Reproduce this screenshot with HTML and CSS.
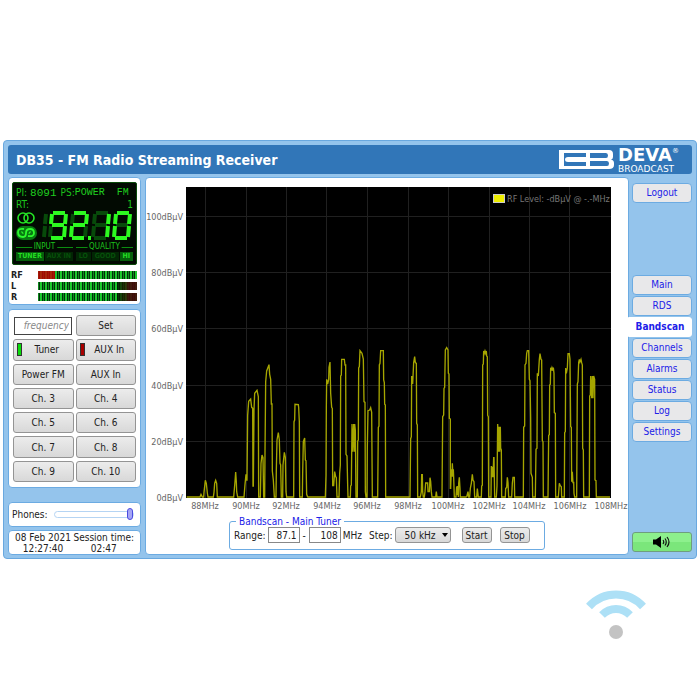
FILE: index.html
```html
<!DOCTYPE html>
<html lang="en">
<head>
<meta charset="utf-8">
<title>DB35 - FM Radio Streaming Receiver</title>
<link rel="stylesheet" href="styles.css">
</head>
<body>
<div class="app">
  <header class="header">
    <h1>DB35 - FM Radio Streaming Receiver</h1>
    <div class="brand">
      <svg class="brand-mark" width="55" height="20" viewBox="0 0 55 20" aria-hidden="true">
        <path fill="#fff" fill-rule="evenodd" d="M0 0H50Q54 0 54 4V7Q54 9 52 9.500Q55 10 55 13V15Q55 19 50 19H0ZM5 3V16H27V3ZM31 3V8H47Q49 8 49 5.500Q49 3 47 3ZM31 11V16H48Q50 16 50 13.500Q50 11 48 11Z"/>
        <path fill="#fff" d="M9 7H31V12H9Q6 12 6 9.500Q6 7 9 7Z"/>
      </svg>
      <div class="brand-name"><strong>DEVA<sup>®</sup></strong><span>BROADCAST</span></div>
    </div>
  </header>
  <div class="body">
    <aside class="side">
      <section class="panel display">
        <div class="lcd">
          <div class="lcd-row"><span>PI:</span><code class="code">8091</code><span class="ps">PS:</span><code>POWER&nbsp; FM</code></div>
          <div class="lcd-row rt"><span>RT:</span><span>1</span></div>
          <div class="lcd-main">
            <svg class="lcd-icons" width="22" height="32" viewBox="0 0 22 32" aria-hidden="true">
              <g fill="none" stroke="#25e625" stroke-width="1.600"><circle cx="7" cy="7" r="5"/><circle cx="13" cy="7" r="5"/></g>
              <rect x="0" y="15" width="21" height="14" rx="7" fill="#087a12"/>
              <path d="M8 18Q2 17 2 21Q2 26 7 26Q10 26 10 22Q10 18 14 18Q18 18 18 22Q18 26 12 25" fill="none" stroke="#2dfa2d" stroke-width="1.800"/>
              <path d="M5 21Q7 20 7 23M15 21Q13 20 13 23" fill="none" stroke="#2dfa2d"/>
            </svg>
            <svg class="segments" width="91" height="30" viewBox="0 0 91 30" role="img" aria-label="92.10">
              <defs>
                <path id="sa" d="M5 2H17"/><path id="sb" d="M18 3L17 13"/><path id="sc" d="M17 15L16 26"/>
                <path id="sd" d="M3 27H15"/><path id="se" d="M3 15L2 26"/><path id="sf" d="M4 3L3 13"/><path id="sg" d="M4 14H16"/>
              </defs>
              <g class="off">
                <path d="M4 3L3 13M3 15L2 26"/>
                <use href="#se" x="6"/><use href="#sf" x="27"/><use href="#sc" x="27"/>
                <use href="#sa" x="49"/><use href="#sd" x="49"/><use href="#se" x="49"/><use href="#sf" x="49"/><use href="#sg" x="49"/>
                <use href="#sg" x="70"/>
              </g>
              <g class="on">
                <use href="#sa" x="6"/><use href="#sb" x="6"/><use href="#sc" x="6"/><use href="#sd" x="6"/><use href="#sf" x="6"/><use href="#sg" x="6"/>
                <use href="#sa" x="27"/><use href="#sb" x="27"/><use href="#sg" x="27"/><use href="#se" x="27"/><use href="#sd" x="27"/>
                <path d="M46 27H49"/>
                <use href="#sb" x="49"/><use href="#sc" x="49"/>
                <use href="#sa" x="70"/><use href="#sb" x="70"/><use href="#sc" x="70"/><use href="#sd" x="70"/><use href="#se" x="70"/><use href="#sf" x="70"/>
              </g>
            </svg>
          </div>
          <div class="lcd-groups">
            <div class="lcd-group input"><span class="cap">INPUT</span><div><b class="lit">TUNER</b><b>AUX IN</b></div></div>
            <div class="lcd-group quality"><span class="cap">QUALITY</span><div><b>LO</b><b>GOOD</b><b class="lit">HI</b></div></div>
          </div>
        </div>
        <div class="meters">
          <span>RF</span><i class="meter rf"></i>
          <span>L</span><i class="meter level"></i>
          <span>R</span><i class="meter level"></i>
        </div>
      </section>
      <section class="panel keys">
        <input type="text" placeholder="frequency" aria-label="Frequency">
        <button>Set</button>
        <button class="source"><i class="led green"></i>Tuner</button><button class="source"><i class="led red"></i>AUX In</button>
        <button>Power FM</button><button>AUX In</button>
        <button>Ch. 3</button><button>Ch. 4</button>
        <button>Ch. 5</button><button>Ch. 6</button>
        <button>Ch. 7</button><button>Ch. 8</button>
        <button>Ch. 9</button><button>Ch. 10</button>
      </section>
      <section class="panel phones">
        <label for="phones">Phones:</label>
        <input id="phones" type="range" min="0" max="100" value="100">
      </section>
      <section class="panel clock">
        <div>08 Feb 2021<br>12:27:40</div>
        <div>Session time:<br>02:47</div>
      </section>
    </aside>
    <main class="panel main">
      <svg class="chart" viewBox="146 178 482 336" role="img" aria-label="RF level by frequency">
        <rect x="186" y="187" width="425" height="311" fill="#000"/>
        <path class="grid" d="M205.500 187V498M246.500 187V498M286.500 187V498M326.500 187V498M367.500 187V498M408.500 187V498M448.500 187V498M489.500 187V498M529.500 187V498M569.500 187V498M186 216.500H611M186 272.500H611M186 328.500H611M186 385.500H611M186 441.500H611"/>
        <g class="trace">
          <path transform="translate(140 340) scale(.33333)" d="M140 471H180L183 463 187 471H191L192 457 195 430 196 421 199 430 202 459 204 471H220L222 457 224 430 227 421 230 430 232 471H281L285 425 287 396 289 425 290 455 293 471H312L315 433 318 403 319 420 321 420 323 226 326 184 332 177 335 202 338 205 339 438 340 438 342 210 344 160 351 151 355 170 356 471H361L363 370 366 345 369 353 371 471H374L375 338 377 125 380 93 387 74 389 103 392 118 394 192 396 192 397 393 400 420 403 471H408L409 390 411 300 415 278 418 300 420 370 422 375 424 471H428L429 375 433 337 436 352 438 455 440 471H461L462 245 464 240 465 193 475 194 476 202 478 245 479 471H487L488 400 490 305 494 294 496 360 498 362 500 463 503 471"/>
          <path transform="translate(300 340) scale(.33333)" d="M22 471H76L78 405 79 205 80 118 83 132 86 118 87 82 90 66 92 160 95 202 97 205 98 437 101 437 104 395 107 410 109 413 111 471H117L119 400 121 375 122 108 124 105 125 58 133 58 135 75 137 75 138 343 141 348 143 435 144 471H151L152 438 154 435 156 252 158 335 161 252 163 335 164 252 166 270 168 471H172L173 303 175 300 176 84 178 80 180 32 186 40 190 57 192 185 195 187 196 455 198 471H201L202 320 204 212 209 210 212 203 215 217 217 471H233L235 262 237 258 238 75 240 70 242 32 250 32 251 120 253 128 254 193 256 195 257 471H330L332 296 334 290 335 108 338 132 341 68 344 50 346 68 349 70 350 250 352 255 353 471H361L364 455 365 404 367 404 368 455 370 471H373L375 455 377 429 383 429 384 455 388 455 390 413 392 425 394 455 396 471H407L409 455 411 471H426L428 230 431 225 432 145 434 142 436 30 440 23 444 30 445 100 447 102 448 235 451 237 451 445 452 445 454 388 456 410 457 370 459 410 460 388 461 412 463 471H468L470 440 471 465 472 438 475 471 476 430 478 412 480 445 481 471H500"/>
          <path transform="translate(450 340) scale(.33333)" d="M50 471L54 455 56 471H59L61 445 64 430 67 403 69 420 72 425 74 471H80L82 446 85 471H94L95 438 97 436 98 75 100 72 101 33 103 40 105 33 107 40 109 33 110 48 112 50 113 226 115 230 116 471H123L124 378 126 412 128 380 129 412 131 353 132 353 134 471H139L141 438 143 252 146 335 147 260 149 335 151 260 152 325 154 330 155 471H166L167 445 170 443 172 412 174 428 176 471H185L187 430 189 412 193 412 194 471H220L221 262 224 258 225 75 228 70 230 40 232 32 236 32 238 118 240 122 242 235 243 400 247 412 248 471H256L258 328 261 325 262 100 265 108 268 58 270 41 273 58 275 60 277 302 279 305 280 471H294L296 286 298 284 299 135 301 133 302 83 304 92 306 83 309 92 310 83 312 100 313 218 316 220 317 471H325L328 430 331 437 334 440 335 471H343L344 278 346 275 347 84 349 100 352 84 354 41 358 41 360 58 362 260 364 262 365 425 367 395 369 430 371 425 372 460 374 471H380L382 132 384 125 386 68 388 58 390 66 393 58 395 68 397 75 398 325 400 330 401 471H418L419 168 421 165 422 108 425 175 427 108 429 175 431 108 434 118 435 420 438 422 439 471H480"/>
        </g>
        <rect x="493.500" y="194.500" width="11" height="8" fill="#ee0" stroke="#ccc"/>
        <text class="key" x="507" y="202">RF Level: -dBµV @ -.-MHz</text>
        <g class="axis end">
          <text x="183" y="220">100dBµV</text><text x="183" y="276">80dBµV</text><text x="183" y="332">60dBµV</text>
          <text x="183" y="389">40dBµV</text><text x="183" y="445">20dBµV</text><text x="183" y="501">0dBµV</text>
        </g>
        <g class="axis mid">
          <text x="205" y="509">88MHz</text><text x="246" y="509">90MHz</text><text x="286" y="509">92MHz</text><text x="327" y="509">94MHz</text>
          <text x="367" y="509">96MHz</text><text x="408" y="509">98MHz</text><text x="448" y="509">100MHz</text><text x="489" y="509">102MHz</text>
          <text x="529" y="509">104MHz</text><text x="570" y="509">106MHz</text><text x="611" y="509">108MHz</text>
        </g>
      </svg>
      <fieldset class="scan">
        <legend>Bandscan - Main Tuner</legend>
        <div class="scan-row">
          <label for="from">Range:</label><input id="from" type="text" value="87.1">
          <span class="dash">-</span><input type="text" value="108" aria-label="Range end"><span class="unit">MHz</span>
          <label class="step" for="step">Step:</label>
          <span class="select"><select id="step"><option>50 kHz</option></select></span>
          <button class="start">Start</button><button>Stop</button>
        </div>
      </fieldset>
    </main>
    <nav class="nav">
      <a class="logout" href="#logout">Logout</a>
      <a href="#main">Main</a>
      <a href="#rds">RDS</a>
      <a class="active" href="#bandscan">Bandscan</a>
      <a href="#channels">Channels</a>
      <a href="#alarms">Alarms</a>
      <a href="#status">Status</a>
      <a href="#log">Log</a>
      <a href="#settings">Settings</a>
      <button class="listen" aria-label="Listen">
        <svg width="18" height="14" viewBox="0 0 18 14" aria-hidden="true">
          <path d="M0 4.500H3L8 1V13L3 9.500H0Z" fill="#000"/>
          <path d="M10 5Q11.500 7 10 9M12 3.500Q14.500 7 12 10.500M14 2Q18 7 14 12" fill="none" stroke="#111" stroke-width="1.200"/>
        </svg>
      </button>
    </nav>
  </div>
</div>
<footer class="signal">
  <svg width="62" height="50" viewBox="0 0 62 50" aria-hidden="true">
    <path d="M4 17.500Q15 5.500 31 5.500T58 17.500" fill="none" stroke="#ade0f6" stroke-width="8"/>
    <path d="M17 26Q23 20 31 20T45 26" fill="none" stroke="#ade0f6" stroke-width="8"/>
    <circle cx="31" cy="43" r="7" fill="#c3c3c3"/>
  </svg>
</footer>
</body>
</html>
```
FILE: styles.css
```css
* { box-sizing: border-box; }

body {
  margin: 0;
  padding: 140px 3px 0;
  background: #fff;
  color: #222;
  font: 10px/11px "DejaVu Sans Condensed", "DejaVu Sans", sans-serif;
}

button, input, select { font: inherit; color: inherit; margin: 0; }

.app {
  padding: 4px 4px 3px;
  border: 1px solid #69a8df;
  border-radius: 4px;
  background: #94c4ec;
}

.header {
  display: flex;
  align-items: center;
  justify-content: space-between;
  height: 29px;
  margin-bottom: 3px;
  padding: 0 6px 0 8px;
  border-radius: 3px;
  background: #3176b8;
  color: #fff;
}

h1 {
  margin: 0;
  font: bold 14px/16px "DejaVu Sans Condensed", "DejaVu Sans", sans-serif;
}

.brand { display: flex; align-items: center; gap: 4px; }
.brand-name { width: 68px; }
.brand-name strong { display: flex; font: bold 18px/18px "DejaVu Sans", sans-serif; }
.brand-name sup { font-size: 7px; line-height: 10px; font-weight: normal; }
.brand-name span { display: block; font: 9px/10px "DejaVu Sans", sans-serif; }

.body {
  display: grid;
  grid-template-columns: 133px minmax(0, 1fr) 60px;
}

.side { display: flex; flex-direction: column; }

.panel {
  border: 1px solid #6cabe2;
  border-radius: 4px;
  background: #fff;
}

.display { padding: 4px 3px 3px; }

.lcd {
  padding: 4px 3px 3px;
  border: 1px solid #0a4a0a;
  border-radius: 2px;
  background: #020a02;
  color: #1cc41c;
  font-size: 10px;
  line-height: 12px;
}

.lcd-row { display: flex; }
.lcd-row code { font: 10px/12px "Liberation Mono", monospace; color: #1fce1f; }
.lcd-row .code { margin-left: 3px; font-size: 11px; }
.ps { margin-left: 4px; }
.rt { justify-content: space-between; }
.lcd-main { display: flex; justify-content: space-between; height: 32px; }
.segments .on, .segments .off { fill: none; stroke-width: 4; }
.segments .on { stroke: #2dfa20; }
.segments .off { stroke: #074a0a; }

.lcd-groups { display: flex; justify-content: space-between; font-size: 8px; line-height: 8px; }
.lcd-group { position: relative; width: 57px; border-top: 1px solid #0b8d10; margin-top: 4px; padding-top: 4px; }
.cap { position: absolute; top: -5px; left: 50%; transform: translateX(-50%); padding: 0 2px; background: #020a02; }
.lcd-group div { display: flex; gap: 1px; }
.lcd-group b { flex: 1 1 auto; background: #022604; color: #06500a; text-align: center; font-size: 7px; line-height: 9px; white-space: nowrap; }
.lcd-group b.lit { background: #06600b; color: #23de23; }

.meters {
  display: grid;
  grid-template-columns: 26px 1fr;
  row-gap: 3px;
  margin-top: 6px;
  font-size: 9px;
  line-height: 8px;
  font-weight: bold;
}
.meters span { margin-left: -1px; }
.meter {
  height: 8px;
  background: repeating-linear-gradient(90deg, #0c8a1c 0 1px, #02300a 1px 2px, #1cc82c 2px 4px, #02300a 4px 5px);
}
.rf { background: linear-gradient(90deg, rgba(200, 0, 0, .8) 17px, transparent 17px), repeating-linear-gradient(90deg, #0c8a1c 0 1px, #02300a 1px 2px, #1cc82c 2px 4px, #02300a 4px 5px); }
.level { background: linear-gradient(90deg, transparent 80%, rgba(0, 20, 0, .7) 80%, rgba(40, 30, 0, .8) 88%, rgba(70, 10, 10, .9) 92%), repeating-linear-gradient(90deg, #0c8a1c 0 1px, #02300a 1px 2px, #1cc82c 2px 4px, #02300a 4px 5px); }

.keys {
  display: grid;
  grid-template-columns: 1fr 1fr;
  grid-auto-rows: 1fr;
  gap: 3px 2px;
  min-height: 179px;
  margin-top: 4px;
  padding: 5px 4px;
}
.keys input { align-self: center; width: 58px; height: 18px; margin-left: 1px; padding: 0 2px; border: 1px solid #444; text-align: right; }
.keys input::placeholder { color: #888; font-style: italic; opacity: 1; }

button {
  padding: 0;
  border: 1px solid #949494;
  border-radius: 3px;
  background: linear-gradient(#ececec, #d8d8d8);
}
.keys button { min-width: 0; }
.source { display: flex; align-items: center; justify-content: center; position: relative; padding-left: 7px; }
.led { position: absolute; left: 3px; width: 5px; height: 13px; border: 1px solid #333; }
.green { background: #0bdc0b; }
.red { background: #a80000; }

.phones { display: flex; align-items: center; gap: 6px; height: 25px; margin-top: 14px; padding: 0 6px 0 3px; }
.phones input { flex: 1; min-width: 0; height: 13px; appearance: none; background: none; }
.phones input::-webkit-slider-runnable-track { height: 7px; border: 1px solid #b5d4f3; border-radius: 4px; }
.phones input::-webkit-slider-thumb { appearance: none; width: 6px; height: 12px; margin-top: -4px; border: 1px solid #4b4be0; border-radius: 3px; background: #a5a5f5; }

.clock { display: flex; justify-content: space-between; align-items: center; height: 25px; margin-top: 3px; padding: 0 6px; text-align: center; white-space: nowrap; }

.main { display: flex; flex-direction: column; margin: 0 3px 0 4px; }
.chart { display: block; width: 100%; height: auto; }
.grid { stroke: #202020; fill: none; }
.trace path { fill: none; stroke: #a6a600; stroke-width: 4; }
.axis { fill: #666; font-size: 9px; }
.key { fill: #777; font-size: 9px; }
.end { text-anchor: end; }
.mid { text-anchor: middle; }

.scan {
  width: 316px;
  max-width: 100%;
  margin: 2px auto 4px;
  padding: 0 4px 6px;
  border: 1px solid #6cabe2;
  border-radius: 3px;
}
.scan legend { margin-left: 2px; padding: 0 3px; color: #2020e8; }
.scan-row { display: flex; align-items: center; gap: 2px; }
.scan input { width: 32px; height: 16px; padding: 0 2px; border: 1px solid #888; text-align: right; }
.dash { padding: 0 1px; }
.step { margin-left: 5px; }
.select { position: relative; }
.select::after { content: ""; position: absolute; right: 3px; top: 6px; border: 3px solid transparent; border-top: 4px solid #000; border-bottom: 0; pointer-events: none; }
select { display: block; width: 56px; height: 16px; padding: 0 0 0 9px; appearance: none; border: 1px solid #949494; border-radius: 3px; background: linear-gradient(#ececec, #d8d8d8); }
.scan button { width: 30px; height: 16px; }
.scan .start { margin-left: 9px; margin-right: 6px; }

.nav { display: flex; flex-direction: column; gap: 1px; padding: 6px 0 3px; }
.nav a {
  height: 20px;
  border: 1px solid #6cabe2;
  border-radius: 4px;
  background: #e8e8ea;
  color: #2020e8;
  line-height: 18px;
  text-align: center;
  text-decoration: none;
}
.nav .logout { margin-bottom: 71px; }
.nav .active { margin-left: -4px; border-color: #fff; border-radius: 0 3px 3px 0; background: #fff; font-weight: bold; }
.listen { display: flex; align-items: center; justify-content: center; height: 20px; margin-top: auto; border-color: #6e9e7e; background: linear-gradient(#8df08d 50%, #7be67b 50%); }

.signal { display: flex; justify-content: flex-end; padding: 30px 50px 0 0; }
```
